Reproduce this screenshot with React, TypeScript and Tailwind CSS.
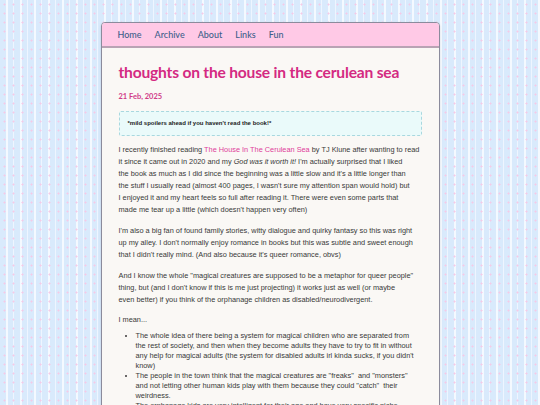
const navItems = ["Home", "Archive", "About", "Links", "Fun"];

function Nav() {
  return (
    <nav className="flex items-center gap-[13px] h-[25px] px-[16px] bg-[#ffc9e6] border-b-2 border-[#b9a3b4] rounded-t-[3px]">
      {navItems.map((item) => (
        <a
          key={item}
          href="#"
          className="text-[9px] font-medium text-[#3d5f8a] font-['Lato',sans-serif]"
        >
          {item}
        </a>
      ))}
    </nav>
  );
}

export default function App() {
  return (
    <div className="min-h-[405px] pt-[22px] bg-[#d9eafc] bg-[radial-gradient(circle,#f3cbe8_0.8px,transparent_1.3px),repeating-linear-gradient(90deg,#d9eafc_0px,#d9eafc_6px,#f4f9ff_6px,#f4f9ff_8px,#d9eafc_8px,#d9eafc_13px,#eef5ff_13px,#eef5ff_14px)] bg-[length:9px_9px,auto]">
      <div className="mx-auto w-[339px] border border-[#8b8b9c] rounded-[4px] bg-[#faf8f5] shadow-sm">
        <Nav />
        <main className="px-[17px] pt-[14px] pb-6 text-[#383838] font-['Liberation_Sans',sans-serif]">
          <h1 className="whitespace-nowrap text-[15.6px] leading-[20px] font-bold text-[#d42a82] font-['Lato',sans-serif] tracking-[-0.2px]">
            thoughts on the house in the cerulean sea
          </h1>
          <p className="mt-[10px] text-[7.5px] leading-[10px] font-bold text-[#d03a88] font-['Lato',sans-serif]">
            21 Feb, 2025
          </p>
          <div className="mt-[9px] h-[25px] flex items-center px-[8px] bg-[#eafafa] border border-dashed border-[#a9d8df] rounded-[2px]">
            <p className="text-[6px] font-semibold text-[#222]">
              *mild spoilers ahead if you haven't read the book!*
            </p>
          </div>
          <div className="mt-[8px] text-[7.35px] leading-[12px]">
            <p>
              I recently finished reading{" "}
              <a href="#" className="text-[#e0409a]">
                The House In The Cerulean Sea
              </a>{" "}
              by TJ Klune after wanting to read
              <br />
              it since it came out in 2020 and my <em>God was it worth it!</em> I'm actually
              surprised that I liked
              <br />
              the book as much as I did since the beginning was a little slow and it's a
              little longer than
              <br />
              the stuff I usually read (almost 400 pages, I wasn't sure my attention span would
              hold) but
              <br />
              I enjoyed it and my heart feels so full after reading it. There were even some
              parts that
              <br />
              made me tear up a little (which doesn't happen very often)
            </p>
            <p className="mt-[9px]">
              I'm also a big fan of found family stories, witty dialogue and quirky fantasy so
              this was right
              <br />
              up my alley. I don't normally enjoy romance in books but this was subtle and
              sweet enough
              <br />
              that I didn't really mind. (And also because it's queer romance, obvs)
            </p>
            <p className="mt-[9px]">
              And I know the whole "magical creatures are supposed to be a metaphor for queer
              people"
              <br />
              thing, but (and I don't know if this is me just projecting) it works just as
              well (or maybe
              <br />
              even better) if you think of the orphanage children as disabled/neurodivergent.
            </p>
            <p className="mt-[8px]">I mean...</p>
            <ul className="list-disc pl-[17px] leading-[10px] mt-[5px]">
              <li>
                The whole idea of there being a system for magical children who are separated
                from
                <br />
                the rest of society, and then when they become adults they have to try to fit
                in without
                <br />
                any help for magical adults (the system for disabled adults irl kinda sucks, if
                you didn't
                <br />
                know)
              </li>
              <li>
                The people in the town think that the magical creatures are "freaks"&nbsp; and
                "monsters"
                <br />
                and not letting other human kids play with them because they could
                "catch"&nbsp; their
                <br />
                weirdness.
              </li>
              <li>
                The orphanage kids are very intelligent for their age and have very specific
                niche interests
              </li>
            </ul>
          </div>
        </main>
      </div>
    </div>
  );
}
